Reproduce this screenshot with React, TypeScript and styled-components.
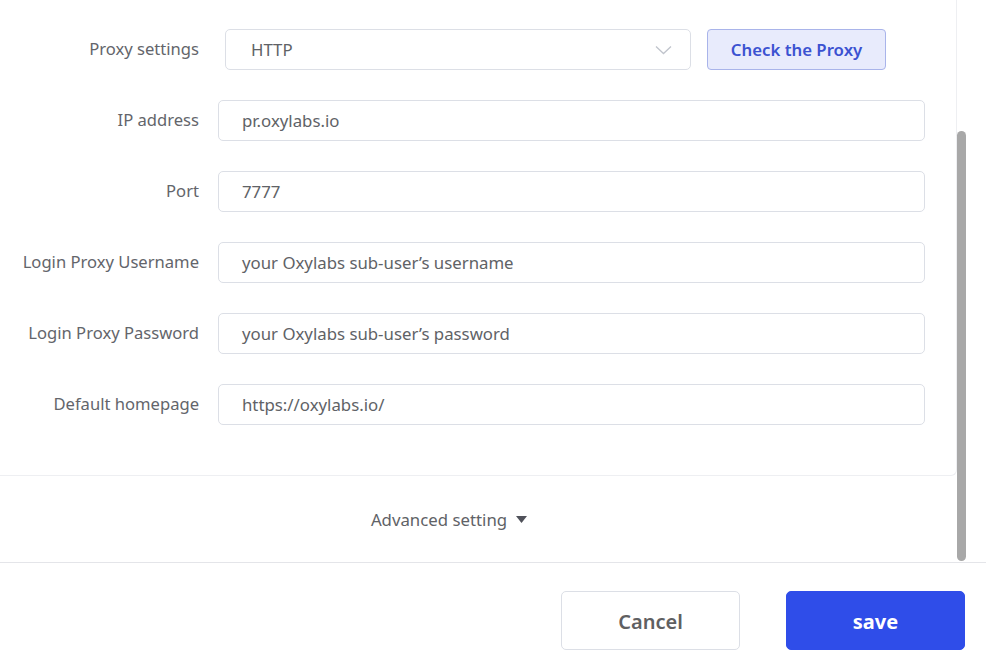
import { FC, useLayoutEffect, useRef, useState } from "react";
import { createGlobalStyle, styled } from "styled-components";

const GlobalStyle = createGlobalStyle`
  html, body {
    margin: 0;
    padding: 0;
    background: #fff;
    font-family: "Noto Sans", "Open Sans", sans-serif;
    color: #606266;
  }
  * {
    box-sizing: border-box;
  }
`;

const Page = styled.div`
  display: flex;
  flex-direction: column;
  width: 986px;
  height: 670px;
  overflow: hidden;
`;

const Body = styled.div`
  position: relative;
  height: 562px;
  flex-shrink: 0;
`;

const ScrollArea = styled.div`
  width: 957px;
  height: 100%;
  overflow-y: scroll;
  overflow-x: hidden;
  scrollbar-width: none;

  &::-webkit-scrollbar {
    display: none;
  }
`;

const Thumb = styled.div`
  position: absolute;
  left: 957px;
  width: 9px;
  border-radius: 5px;
  background: #a8a8a8;
`;

const Card = styled.div`
  display: flex;
  flex-direction: column;
  gap: 30px;
  width: 957px;
  padding: 199px 0 50px 0;
  border-right: 1px solid #eeeff2;
  border-bottom: 1px solid #eeeff2;
  border-bottom-right-radius: 6px;
`;

const Row = styled.div`
  display: flex;
  align-items: center;
  height: 41px;
`;

const Label = styled.label<{ $gap?: number }>`
  width: 199px;
  margin-right: ${(p) => p.$gap ?? 19}px;
  margin-top: -3px;
  text-align: right;
  font-size: 16.6px;
  color: #63656b;
  white-space: nowrap;
`;

const Input = styled.div`
  display: flex;
  align-items: center;
  width: 707px;
  height: 41px;
  padding: 0 23px;
  border: 1px solid #dcdfe6;
  border-radius: 5px;
  font-size: 16.8px;
  color: #606266;
`;

const Select = styled(Input)`
  width: 466px;
  justify-content: space-between;
  padding: 0 18px 0 25px;
`;

const CheckButton = styled.button`
  margin-left: 16px;
  width: 179px;
  height: 41px;
  background: #e8ebfc;
  border: 1px solid #a9b4ea;
  border-radius: 4px;
  color: #3b52d1;
  font-family: inherit;
  font-size: 16.8px;
  font-weight: 600;
`;

const Advanced = styled.div`
  display: flex;
  align-items: center;
  justify-content: center;
  gap: 9px;
  width: 956px;
  height: 86px;
  padding-right: 58px;
  font-size: 16.8px;
  color: #606266;
`;

const Footer = styled.footer`
  display: flex;
  justify-content: flex-end;
  gap: 46px;
  flex: 1;
  padding: 28px 21px 0 0;
  border-top: 1px solid #e4e5e9;
`;

const Button = styled.button<{ $primary?: boolean }>`
  width: 179px;
  height: 59px;
  border-radius: 5px;
  border: 1px solid ${(p) => (p.$primary ? "#2f4de9" : "#dcdfe6")};
  background: ${(p) => (p.$primary ? "#2f4de9" : "#fff")};
  color: ${(p) => (p.$primary ? "#fff" : "#5f6062")};
  font-family: inherit;
  font-size: 20px;
  font-weight: ${(p) => (p.$primary ? 700 : 600)};
  padding-top: 2px;
`;

const Chevron = () => (
  <svg width="17" height="10" viewBox="0 0 17 10">
    <path d="M1 1.5 L8.5 8.5 L16 1.5" fill="none" stroke="#c0c4cc" strokeWidth="1.3" />
  </svg>
);

const Caret = () => (
  <svg width="11" height="7" viewBox="0 0 11 7">
    <path d="M0 0 H11 L5.5 7 Z" fill="#50525a" />
  </svg>
);

const fields = [
  { label: "IP address", value: "pr.oxylabs.io" },
  { label: "Port", value: "7777" },
  { label: "Login Proxy Username", value: "your Oxylabs sub-user’s username" },
  { label: "Login Proxy Password", value: "your Oxylabs sub-user’s password" },
  { label: "Default homepage", value: "https://oxylabs.io/" },
];

const App: FC = () => {
  const scrollRef = useRef<HTMLDivElement>(null);
  const [thumb, setThumb] = useState({ top: 0, height: 0 });

  useLayoutEffect(() => {
    const el = scrollRef.current;
    if (!el) return;
    el.scrollTop = el.scrollHeight - el.clientHeight;
    const track = el.clientHeight - 2;
    setThumb({
      top: 1 + (el.scrollTop / el.scrollHeight) * track,
      height: (el.clientHeight / el.scrollHeight) * track,
    });
  }, []);

  return (
    <Page>
      <GlobalStyle />
      <Body>
        <ScrollArea ref={scrollRef}>
          <Card>
            <Row>
              <Label $gap={26}>Proxy settings</Label>
              <Select>
                HTTP
                <Chevron />
              </Select>
              <CheckButton>Check the Proxy</CheckButton>
            </Row>
            {fields.map((f) => (
              <Row key={f.label}>
                <Label>{f.label}</Label>
                <Input>{f.value}</Input>
              </Row>
            ))}
          </Card>
          <Advanced>
            Advanced setting
            <Caret />
          </Advanced>
        </ScrollArea>
        <Thumb style={{ top: thumb.top, height: thumb.height }} />
      </Body>
      <Footer>
        <Button>Cancel</Button>
        <Button $primary>save</Button>
      </Footer>
    </Page>
  );
};

export default App;
